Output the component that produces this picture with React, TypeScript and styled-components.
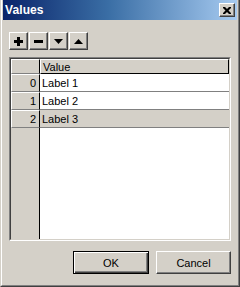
import React from "react";
import styled, { createGlobalStyle } from "styled-components";

const Global = createGlobalStyle`
  html, body { margin: 0; padding: 0; background: #d4d0c8; }
  body { font-family: "Liberation Sans", Arial, sans-serif; font-size: 11px; }
`;

const Window = styled.div`
  width: 240px;
  height: 287px;
  box-sizing: border-box;
  background: #d4d0c8;
  display: flex;
  flex-direction: column;
  border-left: 1px solid #d4d0c8;
  border-right: 1px solid #404040;
  border-bottom: 1px solid #404040;
`;

const Frame = styled.div`
  flex: 1;
  display: flex;
  flex-direction: column;
  border-left: 1px solid #ffffff;
  border-right: 1px solid #808080;
  border-bottom: 1px solid #808080;
  padding: 0 1px 1px 1px;
`;

const TitleBar = styled.div`
  height: 20px;
  display: flex;
  align-items: center;
  justify-content: space-between;
  padding: 0 2px 0 2px;
  background: linear-gradient(90deg, #0a246a 0%, #3a6ea5 45%, #a6caf0 100%);
`;

const Title = styled.span`
  color: #fff;
  font-weight: bold;
  font-size: 12px;
  letter-spacing: 0.1px;
`;

const Raised = styled.button`
  box-sizing: border-box;
  margin: 0;
  padding: 0;
  background: #d4d0c8;
  border: 1px solid;
  border-color: #ffffff #404040 #404040 #ffffff;
  box-shadow: inset -1px -1px #808080;
  display: flex;
  align-items: center;
  justify-content: center;
  font-family: inherit;
  color: #000;
`;

const CloseButton = styled(Raised)`
  width: 16px;
  height: 14px;
`;

const Body = styled.div`
  flex: 1;
  display: flex;
  flex-direction: column;
  padding: 12px 6px 10px 6px;
`;

const Toolbar = styled.div`
  display: flex;
  gap: 1px;
`;

const ToolButton = styled(Raised)`
  width: 19px;
  height: 18px;
`;

const TableOuter = styled.div`
  margin-top: 7px;
  height: 184px;
  box-sizing: border-box;
  border: 1px solid;
  border-color: #808080 #ffffff #ffffff #808080;
  display: flex;
`;

const TableInner = styled.div`
  flex: 1;
  border: 1px solid;
  border-color: #404040 #d4d0c8 #d4d0c8 #404040;
  background: #fff;
  display: flex;
  flex-direction: column;
`;

const Row = styled.div<{ $h: number }>`
  display: flex;
  height: ${(p) => p.$h}px;
`;

const HeaderCorner = styled.div`
  width: 29px;
  box-sizing: border-box;
  background: #d4d0c8;
  border-top: 1px solid #fff;
  border-left: 1px solid #fff;
  border-bottom: 1px solid #808080;
  border-right: 1px solid #000;
`;

const HeaderCell = styled.div`
  flex: 1;
  box-sizing: border-box;
  background: #d4d0c8;
  border-top: 1px solid #fff;
  border-left: 1px solid #fff;
  border-bottom: 1px solid #000;
  border-right: 1px solid #000;
  padding-left: 2px;
  display: flex;
  align-items: center;
  color: #000;
`;

const RowHeader = styled.div`
  width: 29px;
  box-sizing: border-box;
  background: #d4d0c8;
  border-top: 1px solid #fff;
  border-left: 1px solid #fff;
  border-bottom: 1px solid #808080;
  border-right: 1px solid #000;
  display: flex;
  align-items: center;
  justify-content: flex-end;
  padding-right: 3px;
  color: #000;
`;

const Cell = styled.div<{ $selected: boolean }>`
  flex: 1;
  box-sizing: border-box;
  background: ${(p) => (p.$selected ? "#d4d0c8" : "#ffffff")};
  border-bottom: 1px solid #808080;
  padding-left: 2px;
  display: flex;
  align-items: center;
  color: #000;
`;

const Filler = styled.div`
  flex: 1;
  display: flex;
`;

const FillerHeader = styled.div`
  width: 29px;
  box-sizing: border-box;
  background: #d4d0c8;
  border-right: 1px solid #000;
`;

const Footer = styled.div`
  margin-top: 10px;
  display: flex;
  justify-content: flex-end;
  gap: 7px;
`;

const DialogButton = styled(Raised)<{ $default?: boolean }>`
  width: ${(p) => (p.$default ? 76 : 75)}px;
  height: 23px;
  font-size: 11px;
  ${(p) =>
    p.$default
      ? `outline: 1px solid #000; outline-offset: -1px; border-color: #000; box-shadow: inset 1px 1px #fff, inset -1px -1px #404040, inset -2px -2px #808080;`
      : ``}
`;

const Icon = ({ d }: { d: string }) => (
  <svg width="9" height="9" viewBox="0 0 9 9">
    <path d={d} fill="#000" />
  </svg>
);

const rows = ["Label 1", "Label 2", "Label 3"];

export default function App() {
  return (
    <>
      <Global />
      <Window>
        <Frame>
          <TitleBar>
            <Title>Values</Title>
            <CloseButton aria-label="Close">
              <svg width="8" height="7" viewBox="0 0 8 7">
                <path
                  d="M0 0h2l2 2 2-2h2v1l-2.5 2.5L8 6v1H6L4 5 2 7H0V6l2.5-2.5L0 1z"
                  fill="#000"
                />
              </svg>
            </CloseButton>
          </TitleBar>
          <Body>
            <Toolbar>
              <ToolButton aria-label="Add">
                <Icon d="M3 0h3v3h3v3H6v3H3V6H0V3h3z" />
              </ToolButton>
              <ToolButton aria-label="Remove">
                <Icon d="M0 3h9v3H0z" />
              </ToolButton>
              <ToolButton aria-label="Down">
                <Icon d="M0 2h9L4.5 7z" />
              </ToolButton>
              <ToolButton aria-label="Up">
                <Icon d="M0 7h9L4.5 2z" />
              </ToolButton>
            </Toolbar>
            <TableOuter>
              <TableInner>
                <Row $h={15}>
                  <HeaderCorner />
                  <HeaderCell>Value</HeaderCell>
                </Row>
                {rows.map((r, i) => (
                  <Row $h={18} key={r}>
                    <RowHeader>{i}</RowHeader>
                    <Cell $selected={i === 2}>{r}</Cell>
                  </Row>
                ))}
                <Filler>
                  <FillerHeader />
                </Filler>
              </TableInner>
            </TableOuter>
            <Footer>
              <DialogButton $default>OK</DialogButton>
              <DialogButton>Cancel</DialogButton>
            </Footer>
          </Body>
        </Frame>
      </Window>
    </>
  );
}
